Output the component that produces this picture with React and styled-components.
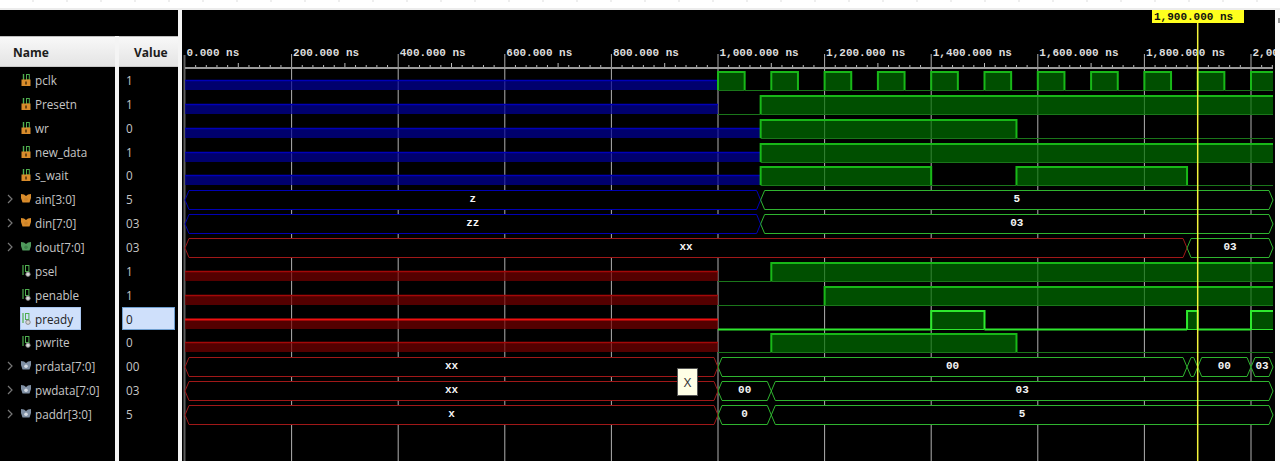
import React from "react";
import styled, { createGlobalStyle } from "styled-components";

const NS = 0.533;
const tx = (ns) => 185 + ns * NS;
const END = 1273;
const PITCH = 23.86;

const signals = [
  { name: "pclk", value: "1", icon: "in", clock: true },
  { name: "Presetn", value: "1", icon: "in", wave: [["z", 0, 1000], [0, 1000, 1080], [1, 1080, 2040]] },
  { name: "wr", value: "0", icon: "in", wave: [["z", 0, 1080], [1, 1080, 1560], [0, 1560, 2040]] },
  { name: "new_data", value: "1", icon: "in", wave: [["z", 0, 1080], [1, 1080, 2040]] },
  { name: "s_wait", value: "0", icon: "in", wave: [["z", 0, 1080], [1, 1080, 1400], [0, 1400, 1560], [1, 1560, 1880], [0, 1880, 2040]] },
  { name: "ain[3:0]", value: "5", icon: "busIn", bus: [["z", "z", 0, 1080], ["v", "5", 1080, 2040]] },
  { name: "din[7:0]", value: "03", icon: "busIn", bus: [["z", "zz", 0, 1080], ["v", "03", 1080, 2040]] },
  { name: "dout[7:0]", value: "03", icon: "busOut", bus: [["x", "xx", 0, 1880], ["v", "03", 1880, 2040]] },
  { name: "psel", value: "1", icon: "local", wave: [["x", 0, 1000], [0, 1000, 1100], [1, 1100, 2040]] },
  { name: "penable", value: "1", icon: "local", wave: [["x", 0, 1000], [0, 1000, 1200], [1, 1200, 2040]] },
  { name: "pready", value: "0", icon: "local", selected: true, wave: [["x", 0, 1000], [0, 1000, 1400], [1, 1400, 1500], [0, 1500, 1880], [1, 1880, 1900], [0, 1900, 2000], [1, 2000, 2040]] },
  { name: "pwrite", value: "0", icon: "local", wave: [["x", 0, 1000], [0, 1000, 1100], [1, 1100, 1560], [0, 1560, 2040]] },
  { name: "prdata[7:0]", value: "00", icon: "busLocal", bus: [["x", "xx", 0, 1000], ["v", "00", 1000, 1880], ["v", "", 1880, 1900], ["v", "00", 1900, 2000], ["v", "03", 2000, 2040]] },
  { name: "pwdata[7:0]", value: "03", icon: "busLocal", bus: [["x", "xx", 0, 1000], ["v", "00", 1000, 1100], ["v", "03", 1100, 2040]] },
  { name: "paddr[3:0]", value: "5", icon: "busLocal", bus: [["x", "x", 0, 1000], ["v", "0", 1000, 1100], ["v", "5", 1100, 2040]] },
];

const GlobalStyle = createGlobalStyle`
  html, body {
    margin: 0;
    padding: 0;
    background: #fff;
    overflow: hidden;
  }
`;

const Page = styled.div`
  width: 1280px;
  height: 461px;
  display: flex;
  flex-direction: column;
  font-family: "Open Sans", "Liberation Sans", sans-serif;
`;

const TopStrip = styled.div`
  height: 8px;
  flex: none;
  background: repeating-linear-gradient(90deg, #fff 0 32px, #eee 32px 34px);
  background-size: 100% 2px;
  background-repeat: no-repeat;
  background-color: #fff;
  border-bottom: 2px solid #ececec;
`;

const Body = styled.div`
  flex: 1;
  min-height: 0;
  display: flex;
`;

const SidePanel = styled.div`
  width: 178px;
  flex: none;
  display: flex;
  flex-direction: column;
  background: #000;
`;

const SideSpacer = styled.div`
  height: 26px;
  flex: none;
`;

const Columns = styled.div`
  flex: 1;
  display: flex;
  gap: 4px;
  background: #f4f4f4;
`;

const Column = styled.div`
  width: ${(p) => p.$width}px;
  flex: none;
  background: #000;
`;

const Header = styled.div`
  height: 31px;
  box-sizing: border-box;
  padding: 2px 0 0 ${(p) => p.$left}px;
  display: flex;
  align-items: center;
  font-size: 12px;
  font-weight: 700;
  color: #1c1c1c;
  background: linear-gradient(#f8f8f8, #e4e4e4);
  border-top: 1px solid #bdbdbd;
  border-bottom: 1px solid #c8c8c8;
`;

const Rows = styled.div`
  padding-top: 1px;
`;

const NameRow = styled.div`
  height: ${PITCH}px;
  display: flex;
  align-items: center;
`;

const ChevronSlot = styled.div`
  width: 20px;
  flex: none;
  display: flex;
  justify-content: center;
`;

const NameCell = styled.div`
  height: 23px;
  box-sizing: border-box;
  display: flex;
  align-items: center;
  gap: 4px;
  padding: 0 8px 0 1px;
  font-size: 11.7px;
  white-space: nowrap;
  color: ${(p) => (p.$selected ? "#222" : "#c6c6c6")};
  background: ${(p) => (p.$selected ? "#cfe0fb" : "transparent")};
  box-shadow: ${(p) => (p.$selected ? "inset 0 0 0 1px #a9c6ee" : "none")};
`;

const ValueRow = styled.div`
  height: ${PITCH}px;
  display: flex;
  align-items: center;
  padding: 0 3px;
`;

const ValueCell = styled.div`
  flex: 1;
  height: 23px;
  box-sizing: border-box;
  display: flex;
  align-items: center;
  padding-left: 4px;
  font-size: 11.7px;
  color: ${(p) => (p.$selected ? "#222" : "#c6c6c6")};
  background: ${(p) => (p.$selected ? "#cfe0fb" : "transparent")};
  box-shadow: ${(p) => (p.$selected ? "inset 0 0 0 1px #6f9fd0" : "none")};
`;

const WhiteBar = styled.div`
  width: 4px;
  flex: none;
  background: #f4f4f4;
`;

const WaveArea = styled.div`
  position: relative;
  flex: 1;
  background: #000;
  overflow: hidden;
`;

const WaveSvg = styled.svg`
  display: block;
  width: 1093px;
  height: 451px;
`;

const RulerLabel = styled.text`
  font-family: "Liberation Mono", monospace;
  font-size: 11px;
  font-weight: 700;
  fill: ${(p) => p.$fill || "#ddd"};
`;

const BusLabel = styled.text`
  font-family: "Liberation Mono", monospace;
  font-size: 11px;
  font-weight: 700;
  fill: #f4f4f4;
  text-anchor: middle;
`;

const Tooltip = styled.div`
  position: absolute;
  left: 495px;
  top: 358px;
  width: 21px;
  height: 28px;
  box-sizing: border-box;
  display: flex;
  align-items: center;
  justify-content: center;
  background: #ffffe6;
  border: 1px solid #555;
  font-size: 13px;
  color: #333;
`;

const RightStrip = styled.div`
  width: 5px;
  flex: none;
  background: #f8f8f8;
  padding-top: 8px;
  box-sizing: border-box;
`;

const ScrollMark = styled.div`
  width: 2px;
  height: 5px;
  margin-left: 3px;
  background: #999;
`;

const Chevron = () => (
  <svg width="6" height="10" viewBox="0 0 6 10">
    <path d="M1 1l4 4-4 4" fill="none" stroke="#777" strokeWidth="1.2" />
  </svg>
);

// small signal type icons from the simulator's object list
const SignalIcon = ({ type }) => {
  if (type === "in") {
    return (
      <svg width="10" height="12" viewBox="0 0 10 12">
        <path d="M2.5 0v6" stroke="#4fae4f" strokeWidth="1.4" />
        <rect x="5.5" y="0.5" width="2.8" height="5.5" fill="none" stroke="#4fae4f" />
        <rect x="0.5" y="5.5" width="9" height="6.5" fill="#d98c2b" />
        <rect x="4" y="7.5" width="2" height="3" fill="#6b4512" />
      </svg>
    );
  }
  if (type === "local") {
    return (
      <svg width="10" height="12" viewBox="0 0 10 12">
        <path d="M2 0v10" stroke="#4fae4f" strokeWidth="1.2" />
        <rect x="4.5" y="0.5" width="3.4" height="6" fill="none" stroke="#4fae4f" />
        <circle cx="7" cy="9.2" r="2.2" fill="#d8d8d8" stroke="#777" strokeWidth="0.8" />
      </svg>
    );
  }
  const colors = {
    busIn: ["#d98c2b", "#c9822a"],
    busOut: ["#4f9a5c", "#3c8048"],
    busLocal: ["#7f8fa3", "#d5dbe3"],
  }[type];
  return (
    <svg width="10" height="12" viewBox="0 0 10 12">
      <path d="M0 1l3 .6 2 1.4 2-1.4 3-.6v4l-1.5 4.5h-7L0 5z" fill={colors[0]} />
      <circle cx="5" cy="6.2" r="1.8" fill={colors[1]} />
    </svg>
  );
};

const busPath = (x1, x2, top, bot) => {
  const mid = (top + bot) / 2;
  const s = Math.min(4, (x2 - x1) / 2);
  return `M${x1} ${mid}L${x1 + s} ${top}H${x2 - s}L${x2} ${mid}L${x2 - s} ${bot}H${x1 + s}Z`;
};

const BUS_COLORS = { z: "#0000b4", x: "#a01818", v: "#2fb42f" };

const BusRow = ({ segs, top }) => {
  const bot = top + 19;
  return segs.map(([kind, label, a, b]) => {
    const x1 = tx(a);
    const x2 = b >= 2040 ? END : tx(b);
    return (
      <g key={a}>
        <path d={busPath(x1, x2, top + 0.5, bot + 0.5)} fill="#000" stroke={BUS_COLORS[kind]} />
        {label && (
          <BusLabel x={(x1 + x2) / 2} y={top + 12}>
            {label}
          </BusLabel>
        )}
      </g>
    );
  });
};

const ScalarRow = ({ segs, top, selected }) => {
  const bot = top + 19;
  const hi = selected ? "#2ee82e" : "#18b818";
  const lo = selected ? "#2ee82e" : "#1a761a";
  const fill = "rgba(0,112,0,.7)";
  return segs.map(([level, a, b], i) => {
    const x1 = tx(a);
    const x2 = b >= 2040 ? END : tx(b);
    if (level === "z" || level === "x") {
      const blue = level === "z";
      const y = top + 9;
      return (
        <g key={i}>
          <rect x={x1} y={y} width={x2 - x1} height={bot - y} fill={blue ? "rgba(0,0,155,.7)" : "rgba(120,0,0,.7)"} />
          <path d={`M${x1} ${y + 0.5}H${x2}`} stroke={blue ? "#0000b8" : selected ? "#f01010" : "#a40808"} strokeWidth={selected ? 2 : 1.5} />
        </g>
      );
    }
    if (level === 1) {
      return (
        <g key={i}>
          <rect x={x1} y={top} width={x2 - x1} height={bot - top} fill={fill} />
          <path d={`M${x1} ${bot + 0.5}H${x2}`} stroke={lo} />
          <path d={`M${x1} ${bot}V${top + 1}H${x2}`} fill="none" stroke={hi} strokeWidth="2" />
          {i < segs.length - 1 && <path d={`M${x2} ${top}V${bot}`} stroke={hi} strokeWidth="2" />}
        </g>
      );
    }
    return <path key={i} d={`M${x1} ${bot + 0.5}H${x2}`} stroke={lo} strokeWidth={selected ? 2 : 1} />;
  });
};

const clockSegs = () => {
  const out = [];
  for (let t = 1000; t < 2040; t += 50) {
    out.push([Math.round((t - 1000) / 50) % 2 === 0 ? 1 : 0, t, Math.min(t + 50, 2040)]);
  }
  return [["z", 0, 1000], ...out];
};

const Ruler = () => {
  const ticks = [];
  for (let t = 0; t <= 2040; t += 20) {
    const major = t % 200 === 0;
    const mid = t % 100 === 0;
    if (!major) ticks.push(<path key={t} d={`M${tx(t)} ${mid ? 63 : 65}V67`} stroke="#bbb" />);
  }
  const labels = [];
  for (let t = 0; t <= 2000; t += 200) {
    const text = t >= 1000 ? `${Math.floor(t / 1000)},${String(t % 1000).padStart(3, "0")}.000 ns` : `${t}.000 ns`;
    labels.push(
      <RulerLabel key={t} x={tx(t) + 1.5} y={55.5}>
        {text}
      </RulerLabel>
    );
  }
  return (
    <g>
      {labels}
      {ticks}
      <rect x="185" y="67" width={END - 185} height="2" fill="#9a9a9a" />
    </g>
  );
};

const Waves = () => {
  const grid = [];
  for (let t = 200; t <= 2000; t += 200) {
    grid.push(<path key={t} d={`M${tx(t)} 54V461`} stroke="#b0b0b0" />);
  }
  return (
    <WaveSvg viewBox="182 10 1093 451">
      <rect x="183.5" y="55" width="2" height="406" fill="#5c5c5c" />
      {grid}
      <Ruler />
      {signals.map((s, i) => {
        const top = Math.round(71 + i * PITCH);
        return s.bus ? (
          <BusRow key={s.name} segs={s.bus} top={top} />
        ) : (
          <ScalarRow key={s.name} segs={s.clock ? clockSegs() : s.wave} top={top} selected={s.selected} />
        );
      })}
      <path d={`M${tx(1900)} 23V461`} stroke="#f4f43a" strokeWidth="1.5" />
      <rect x="1152" y="10" width="92" height="13" fill="#ffff1e" />
      <RulerLabel x="1154" y="20" $fill="#111">
        1,900.000 ns
      </RulerLabel>
    </WaveSvg>
  );
};

const App = () => {
  return (
    <Page>
      <GlobalStyle />
      <TopStrip />
      <Body>
        <SidePanel>
          <SideSpacer />
          <Columns>
            <Column $width={115}>
              <Header $left={13}>Name</Header>
              <Rows>
                {signals.map((s) => (
                  <NameRow key={s.name}>
                    <ChevronSlot>{s.bus && <Chevron />}</ChevronSlot>
                    <NameCell $selected={s.selected}>
                      <SignalIcon type={s.icon} />
                      {s.name}
                    </NameCell>
                  </NameRow>
                ))}
              </Rows>
            </Column>
            <Column $width={59}>
              <Header $left={15}>Value</Header>
              <Rows>
                {signals.map((s) => (
                  <ValueRow key={s.name}>
                    <ValueCell $selected={s.selected}>{s.value}</ValueCell>
                  </ValueRow>
                ))}
              </Rows>
            </Column>
          </Columns>
        </SidePanel>
        <WhiteBar />
        <WaveArea>
          <Waves />
          <Tooltip>X</Tooltip>
        </WaveArea>
        <RightStrip>
          <ScrollMark />
        </RightStrip>
      </Body>
    </Page>
  );
};

export default App;
